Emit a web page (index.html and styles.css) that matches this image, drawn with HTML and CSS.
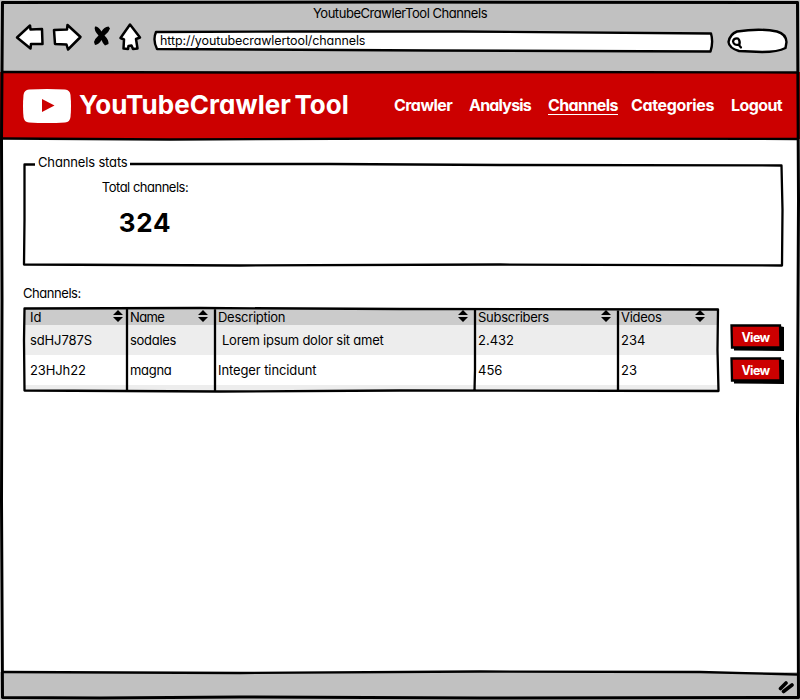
FILE: index.html
```html
<!DOCTYPE html>
<html lang="en">
<head>
<meta charset="utf-8">
<title>YoutubeCrawlerTool Channels</title>
<link rel="stylesheet" href="styles.css">
</head>
<body>
<div class="window">
  <header class="chrome">
    <div class="window-title">YoutubeCrawlerTool Channels</div>
    <div class="toolbar">
      <svg class="nav-icons" width="130" height="34" viewBox="14 20 130 34">
        <g class="outline">
          <path d="M17 37.500L30 25.500L30.500 29.500L42 29L42.500 44L31 44L30.500 48.500Z"/>
          <path d="M54 30L67 29.500L67.500 25L80.500 37L68 49.500L66.500 44.500L55 44Z"/>
          <path d="M130 24.500L140 37.500L136 39L137.500 48.500L133 49L131.500 45.500L128.500 46L128 49L123.500 48.500L124 39.500L120.500 38Z"/>
        </g>
        <path class="cross" d="M95 26.500Q98 26 101.500 31.500Q104 27 108.500 26.500L110 28.500Q109 32 104.500 35.500Q109 40 108.500 44L105 45.500Q103 44 101.500 40Q99 44.500 95 45L94 42Q95 38.500 98.500 35.500Q93.500 30 95 26.500Z"/>
      </svg>
      <div class="address">
        <svg class="sketch" width="562" height="26" viewBox="152 28 562 26"><path class="field" d="M156 32L300 31.500L460 31.500L711 33.500Q713.500 42 710.500 51.500L430 50.500L157 49Q152.500 40 156 32Z"/></svg>
        <span class="url">http://youtubecrawlertool/channels</span>
      </div>
      <svg class="search" width="64" height="28" viewBox="726 27 64 28">
        <path class="field" d="M737 31.500Q760 28 777 31.500Q786 34 786.500 42L785.500 48Q778 52 762 52L739 51Q729 48 728.500 42Q730 34 737 31.500Z"/>
        <path class="glass" d="M733 41.500Q733.500 38 738 38.500Q740.500 41 739.500 44.500Q734 46 733 41.500M738.500 44.500L741 47.500"/>
      </svg>
    </div>
  </header>

  <div class="banner">
    <svg class="logo" width="48" height="34" viewBox="0 0 48 34"><path fill="#fff" d="M6 .5Q24-.5 42 .5Q47 1 47.500 6Q48.500 17 47.500 28Q47 33 42 33.500Q24 34.500 6 33.500Q1 33 .5 28Q-.5 17 .5 6Q1 1 6 .5Z"/><path fill="#c00" d="M19 10L31.500 16.500L19 23Z"/></svg>
    <div class="brand">YouTubeCrawle<span class="gap">r</span>Tool</div>
    <nav class="menu">
      <a class="crawler">Crawler</a><a class="analysis">Analysis</a><a class="channels">Channels</a><a class="categories">Categories</a><a class="logout">Logout</a>
    </nav>
  </div>

  <main class="content">
    <section class="stats">
      <svg class="sketch" width="762" height="106" viewBox="22 161 762 106"><path class="line" d="M35 164.500L24.500 164.500L24.500 220L24 264.500L240 265.500L500 264.500L782 265.500L782.500 210L781.500 165.500L500 165L330 164L130 164"/></svg>
      <h2 class="legend">Channels stats</h2>
      <div class="total">
        <div class="total-label">Total channels:</div>
        <div class="total-value">324</div>
      </div>
    </section>

    <h2 class="list-title">Channels:</h2>
    <div class="list">
      <div class="grid-wrap">
        <div class="grid">
          <div class="row head">
            <div class="cell first"><span class="h-id">Id</span><svg class="sort" width="10" height="12"><path d="M0 5L5 0L10 5ZM0 7L5 12L10 7Z"/></svg></div>
            <div class="cell"><span class="h-name">Name</span><svg class="sort" width="10" height="12"><path d="M0 5L5 0L10 5ZM0 7L5 12L10 7Z"/></svg></div>
            <div class="cell"><span class="h-desc">Description</span><svg class="sort" width="10" height="12"><path d="M0 5L5 0L10 5ZM0 7L5 12L10 7Z"/></svg></div>
            <div class="cell"><span class="h-subs">Subscribers</span><svg class="sort" width="10" height="12"><path d="M0 5L5 0L10 5ZM0 7L5 12L10 7Z"/></svg></div>
            <div class="cell last"><span class="h-videos">Videos</span><svg class="sort" width="10" height="12"><path d="M0 5L5 0L10 5ZM0 7L5 12L10 7Z"/></svg></div>
          </div>
          <div class="row shaded">
            <div class="cell first"><span class="c-id1">sdHJ787S</span></div>
            <div class="cell"><span class="c-name">sodales</span></div>
            <div class="cell indent"><span class="c-desc1">Lorem ipsum dolor sit amet</span></div>
            <div class="cell"><span>2.432</span></div>
            <div class="cell"><span>234</span></div>
          </div>
          <div class="row">
            <div class="cell first"><span class="c-id2">23HJh22</span></div>
            <div class="cell"><span class="c-name">magna</span></div>
            <div class="cell"><span class="c-desc2">Integer tincidunt</span></div>
            <div class="cell"><span>456</span></div>
            <div class="cell"><span>23</span></div>
          </div>
          <div class="row shaded stub"></div>
        </div>
        <svg class="sketch" width="698" height="87" viewBox="22 306 698 87"><path class="line" d="M24.500 308.500L200 308L400 309L718 309.500L717.500 350L718.500 391L400 390.500L220 391.500L24.500 390.500L24 340ZM127 309V391M215 309V391M475 309V370L474.500 391M618 309V391"/></svg>
      </div>
      <div class="actions">
        <button class="view"><svg class="sketch" width="55" height="28"><path class="shadow" d="M4 24L49 24L49 2L54 3L54 27L4 26.500Z"/><path class="face" d="M1.500 1.500L50 1.500L50.500 23.500L2 23.500Z"/></svg><span>View</span></button>
        <button class="view"><svg class="sketch" width="55" height="28"><path class="shadow" d="M4 24L49 24L49 2L54 3L54 27L4 26.500Z"/><path class="face" d="M1.500 1.500L50 1.500L50.500 23.500L2 23.500Z"/></svg><span>View</span></button>
      </div>
    </div>
  </main>

  <footer class="status">
    <svg class="grip" width="18" height="16" viewBox="778 679 18 16"><path d="M780.500 688.500L786 683M783.500 691.500L792 685"/></svg>
  </footer>

  <svg class="sketch" width="800" height="700" viewBox="0 0 800 700">
    <path class="frame" d="M2.500 2.500L400 2L797.500 2.500L798.500 200L797.500 420L798.500 697.500L480 698L240 697L100 698L2.500 697.500L1.500 500L2 300L1.500 140Z"/>
    <path class="line" d="M3 72L250 72.500L500 72L797 72.500M3 138.500L170 139.500L420 138.500L797 139"/>
    <path class="line" d="M3 672L240 673L480 671.500L700 672L797 674.500"/>
  </svg>
</div>
</body>
</html>
```
FILE: styles.css
```css
* { box-sizing: border-box; }
body {
  margin: 0;
  font: 13px/16px Inter, "Liberation Sans", sans-serif;
  font-feature-settings: "cv11";
  color: #000;
}
h2 { margin: 0; font: inherit; font-feature-settings: "cv11"; }
.window { position: relative; width: 800px; height: 700px; display: flex; flex-direction: column; overflow: hidden; background: #fff; }
.sketch { position: absolute; left: 0; top: 0; pointer-events: none; }
.line, .frame { fill: none; stroke: #000; stroke-width: 2.3; stroke-linejoin: round; }
.frame { stroke-width: 3; }
.field { fill: #fff; stroke: #000; stroke-width: 2.4; stroke-linejoin: round; }

.chrome { height: 72px; flex: none; background: #c1c1c1; padding-top: 5px; }
.window-title { text-align: center; height: 15px; letter-spacing: -0.45px; }
.toolbar { display: flex; height: 34px; padding-left: 14px; }
.nav-icons { flex: none; }
.outline path { fill: #fff; stroke: #000; stroke-width: 2.5; stroke-linejoin: round; }
.cross { fill: #000; }
.address { position: relative; width: 562px; height: 26px; margin: 8px 0 0 8px; padding: 4px 0 0 8px; }
.url { position: relative; font-size: 12.5px; letter-spacing: -0.1px; }
.search { margin: 7px 0 0 12px; }
.glass { fill: none; stroke: #000; stroke-width: 2.2; stroke-linecap: round; stroke-linejoin: round; }

.banner { height: 67px; flex: none; display: flex; align-items: center; background: #c00; color: #fff; padding: 0 17px 0 23px; }
.brand { margin-left: 8px; padding-bottom: 2px; font-size: 26px; line-height: 30px; font-weight: 700; width: 315px; flex: none; letter-spacing: 0.05px; }
.gap { letter-spacing: 3.5px; }
.menu { display: flex; font-size: 16px; line-height: 18px; font-weight: 700; }
.menu a { flex: none; white-space: nowrap; }
.crawler { width: 75px; letter-spacing: -0.55px; }
.analysis { width: 79px; letter-spacing: -0.8px; }
.menu .channels { width: 70px; margin-right: 13px; border-bottom: 1px solid #fff; letter-spacing: -0.6px; }
.categories { width: 100px; letter-spacing: -0.35px; }
.logout { letter-spacing: -0.6px; }

.content { flex: 1; padding: 22px 16px 0 22px; }
.stats { position: relative; height: 106px; }
.legend { position: relative; height: 18px; margin-left: 16px; line-height: 3px; letter-spacing: -0.15px; }
.total { position: relative; width: 124px; margin-left: 61px; text-align: center; }
.total-label { letter-spacing: -0.5px; }
.total-value { margin-top: 12px; font-size: 26px; line-height: 32px; font-weight: 700; letter-spacing: 0.8px; }
.list-title { margin: 18px 0 5px 1px; letter-spacing: -0.45px; }
.list { display: flex; }
.grid-wrap { position: relative; width: 698px; height: 87px; padding: 2px; flex: none; }
.grid { overflow: hidden; }
.row { display: grid; grid-template-columns: 103px 88px 260px 143px 100px; height: 30px; align-items: center; }
.cell { display: flex; justify-content: space-between; padding: 0 7px 0 3px; }
.first { padding-left: 6px; padding-right: 4px; }
.last { padding-right: 13px; }
.indent { padding-left: 7px; }
.head { height: 17px; background: #cbcbcb; }
.sort { margin-top: 1px; }
.h-name { letter-spacing: -0.6px; }
.h-desc, .h-subs, .h-videos { letter-spacing: -0.28px; }
.c-id1, .c-id2 { letter-spacing: -0.12px; }
.c-name { letter-spacing: -0.3px; }
.c-desc1 { letter-spacing: -0.23px; }
.c-desc2 { letter-spacing: -0.1px; }
.shaded { background: #ededed; }
.stub { height: 5px; }
.actions { margin: 18px 0 0 10px; display: flex; flex-direction: column; gap: 5px; }
.view { position: relative; width: 55px; height: 28px; border: 0; padding: 0 4px 1px 0; background: none; color: #fff; font: 700 12.5px/16px Inter, "Liberation Sans", sans-serif; letter-spacing: -0.6px; }
.view span { position: relative; }
.face { fill: #c00; stroke: #000; stroke-width: 2.3; }
.shadow { fill: #000; }

.status { height: 28px; flex: none; display: flex; background: #c1c1c1; justify-content: flex-end; padding: 7px 4px 0 0; }
.grip path { fill: none; stroke: #000; stroke-width: 3.6; stroke-linecap: round; }
```
